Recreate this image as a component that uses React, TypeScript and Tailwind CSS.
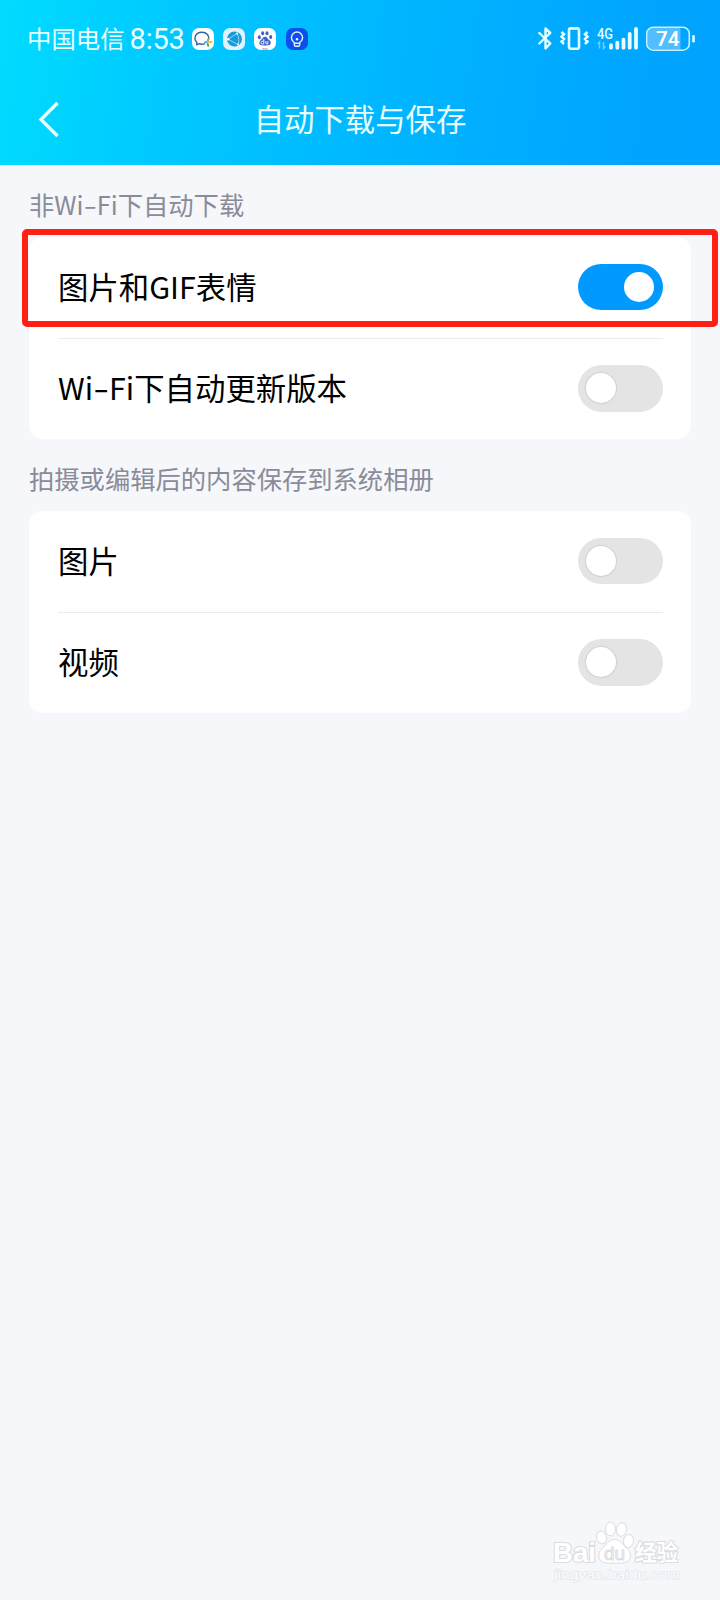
import { useState, type ReactNode } from "react";

function Toggle({ on, onChange }: { on: boolean; onChange: () => void }) {
  return (
    <button
      type="button"
      role="switch"
      aria-checked={on}
      onClick={onChange}
      className={`mb-px flex h-[46.5px] w-[85px] items-center rounded-full px-2 ${
        on ? "justify-end bg-[#0099ff]" : "justify-start bg-[#e4e4e4]"
      }`}
    >
      <span
        className={`h-[30px] w-[30px] rounded-full bg-white ${
          on ? "mr-px" : "shadow-[0_0_1px_1px_rgba(0,0,0,0.09)]"
        }`}
      />
    </button>
  );
}

function WiFi() {
  return (
    <span>
      Wi<span className="mx-[0.09em] inline-block scale-x-150">-</span>Fi
    </span>
  );
}

function SettingRow({
  label,
  initial = false,
}: {
  label: ReactNode;
  initial?: boolean;
}) {
  const [on, setOn] = useState(initial);

  return (
    <div className="flex h-[100.5px] items-center justify-between">
      <span className="pb-[3px] text-[30.4px] leading-none whitespace-nowrap text-black">
        {label}
      </span>
      <Toggle on={on} onChange={() => setOn(!on)} />
    </div>
  );
}

function SectionTitle({ children }: { children: ReactNode }) {
  return (
    <h2 className="flex h-[72px] items-center pt-[7px] text-[25.3px] leading-none text-[#8a8b98]">
      <span>{children}</span>
    </h2>
  );
}

function AppIcons() {
  return (
    <div className="ml-[7px] flex gap-[9.3px]">
      <svg width="22" height="22" viewBox="0 0 22 22" fill="none">
        <rect width="22" height="22" rx="7" fill="#fff" />
        <path
          d="M12.5 15.8c-1.5.5-3.8.5-5.2-.1l-2.7 1.1.4-2.3C1.5 11.6 2.5 4.200 9.800 4.200c5.200 0 7.500 3.600 7 7"
          stroke="#2d62ae"
          strokeWidth="1.4"
          strokeLinecap="round"
          strokeLinejoin="round"
        />
        <path d="M13 14.5l2.200-.8" stroke="#45a0dc" strokeWidth="1.8" strokeLinecap="round" />
        <path d="M16 11.2v2.300" stroke="#e9a23b" strokeWidth="2" strokeLinecap="round" />
        <path d="M17.5 14.3l2-.3" stroke="#e5c532" strokeWidth="2" strokeLinecap="round" />
        <path d="M15.7 16l.5 1.7" stroke="#54a653" strokeWidth="2" strokeLinecap="round" />
      </svg>
      <svg width="22" height="22" viewBox="0 0 22 22" fill="none">
        <rect width="22" height="22" rx="7" fill="#e3f3fd" />
        <circle cx="11.5" cy="11" r="7.5" fill="#159bdc" />
        <path
          d="M5 11.2L14 5.500M5 11.200l10 5.500M14 5.500c2 3.500 2.400 7.500 1 11.200"
          stroke="#b5e4fa"
          strokeWidth=".8"
        />
        <circle cx="5.2" cy="11.2" r="1.3" fill="#fff" />
        <circle cx="14" cy="5.5" r="1" fill="#fff" />
        <circle cx="15" cy="16.6" r="1" fill="#fff" />
      </svg>
      <svg width="22" height="22" viewBox="0 0 22 22" fill="none">
        <rect width="22" height="22" rx="7" fill="#fff" />
        <g fill="#3f5fc4">
          <ellipse cx="5.3" cy="9.2" rx="1.5" ry="2" />
          <ellipse cx="8.7" cy="5.2" rx="1.5" ry="2" />
          <ellipse cx="13" cy="5.2" rx="1.5" ry="2" />
          <ellipse cx="16.7" cy="9" rx="1.5" ry="2" />
          <path d="M11 8.800c-2 0-2.600 2-4 3.200-1.500 1.200-2 2-1.600 3.500.4 1.600 1.800 2 5.600 1.900 3.800.1 5.200-.3 5.600-1.900.4-1.500-.1-2.300-1.600-3.500-1.400-1.200-2-3.200-4-3.200z" />
        </g>
        <path
          d="M9.800 11v5H8.300a1.200 1.200 0 010-2.700h1.500M11.800 13v2q0 1 1 1h1v-3"
          stroke="#fff"
          strokeWidth=".9"
        />
        <path d="M8 21h6" stroke="#d97a8c" strokeWidth="1" />
      </svg>
      <svg width="22" height="22" viewBox="0 0 22 22" fill="none">
        <rect width="22" height="22" rx="7" fill="#0b50e8" />
        <path
          d="M8.300 14.500C6.500 13.300 5.400 11.900 5.400 9.600a5.600 5.600 0 0111.200 0c0 2.300-1.100 3.700-2.900 4.900v2.300q0 1.500-1.500 1.500H9.800q-1.500 0-1.500-1.500zM8.300 15.300h5.400"
          stroke="#e4eeff"
          strokeWidth="1.4"
          strokeLinejoin="round"
        />
        <circle cx="11" cy="11.3" r="1.2" fill="#fff" />
      </svg>
    </div>
  );
}

function SystemIcons() {
  return (
    <svg width="160" height="30" viewBox="0 0 160 30" fill="none">
      {/* bluetooth */}
      <path
        d="M2.300 9l11 10.500-4.800 5V4.500l4.800 4.500-11 10.500"
        stroke="#e4ffff"
        strokeWidth="2.4"
        strokeLinejoin="round"
        strokeLinecap="round"
      />
      {/* vibrate */}
      <rect x="32" y="4.4" width="10" height="20.4" rx="2" stroke="#e4ffff" strokeWidth="2.6" />
      <path
        d="M24.500 8l2.500 2.300-2.500 2.400 2.500 2.400-2.500 2.400 2.500 2.500M50.500 8l-2.500 2.300 2.500 2.400-2.500 2.400 2.500 2.400-2.500 2.500"
        stroke="#e4ffff"
        strokeWidth="2.5"
      />
      {/* mobile signal */}
      <text
        x="60"
        y="14.5"
        fill="#e4ffff"
        fontFamily="Roboto, sans-serif"
        fontSize="15"
        fontWeight="500"
        textLength="16"
        lengthAdjust="spacingAndGlyphs"
      >
        4G
      </text>
      <path d="M62.500 24.500v-6.500l-2 2M66.500 18v6.500l2-2" stroke="#75cdff" strokeWidth="1.5" />
      <path
        d="M74 23.700v-2.500M80.300 23.700v-5M86.500 23.700v-8M92.700 23.700V10M99 23.700V5"
        stroke="#e4ffff"
        strokeWidth="3.8"
        strokeLinecap="round"
      />
      {/* battery */}
      <rect x="111" y="4" width="20" height="21.5" rx="5" fill="#52bdff" />
      <path d="M121 4h22.500v21.500H121z" fill="#52bdff" />
      <rect x="109.800" y="3.2" width="42.5" height="23" rx="6.5" stroke="#c5f2ff" strokeWidth="1.6" />
      <path d="M156.500 12.300v5" stroke="#e4ffff" strokeWidth="2.6" strokeLinecap="round" />
      <text
        x="119"
        y="22"
        fill="#fff"
        fontFamily="Roboto, sans-serif"
        fontSize="21"
        fontWeight="600"
        textLength="23.5"
        lengthAdjust="spacingAndGlyphs"
      >
        74
      </text>
    </svg>
  );
}

function Watermark() {
  return (
    <svg
      className="absolute right-0 bottom-0"
      width="190"
      height="100"
      viewBox="0 0 190 100"
      fill="#fff"
      stroke="#dcdde1"
      strokeWidth="1"
    >
      <g fontFamily="'Liberation Sans', 'Noto Sans CJK SC', sans-serif" fontWeight="700">
        <g strokeWidth="2.2" paintOrder="stroke">
          <text x="23" y="61.5" fontSize="27" textLength="43" lengthAdjust="spacingAndGlyphs">
            Bai
          </text>
          <text x="105" y="60" fontSize="22" textLength="43" lengthAdjust="spacingAndGlyphs">
            经验
          </text>
        </g>
        <ellipse cx="71.5" cy="37.5" rx="5" ry="6.5" transform="rotate(-12 71.5 37.5)" />
        <ellipse cx="80.5" cy="29" rx="5" ry="6.8" />
        <ellipse cx="91.5" cy="29.5" rx="5" ry="6.8" transform="rotate(8 91.5 29.5)" />
        <ellipse cx="98.5" cy="41" rx="5" ry="6.5" transform="rotate(8 98.5 41)" />
        <path d="M84.500 39.500c-6 0-8 5-11.500 8.500-4 3.500-5 6-3.800 10 1.500 5 6 5.500 15.300 5 9.300.5 14 0 15.500-5 1.200-4 .2-6.500-3.800-10-3.500-3.500-5.700-8.500-11.700-8.500z" />
        <text
          x="74"
          y="59.5"
          fontSize="19"
          fontWeight="400"
          fill="#f5f7fb"
          textLength="21"
          lengthAdjust="spacingAndGlyphs"
        >
          du
        </text>
      </g>
      <text
        x="24"
        y="79"
        fontFamily="'Liberation Sans', sans-serif"
        fontSize="13.5"
        textLength="126"
        lengthAdjust="spacingAndGlyphs"
        fill="#fcfcfe"
        stroke="#e6e7eb"
        strokeWidth="1.4"
        paintOrder="stroke"
      >
        jingyan.baidu.com
      </text>
    </svg>
  );
}

export default function App() {
  return (
    <div className="relative min-h-[1600px] w-[720px] overflow-hidden bg-[#f5f7fb] font-['Noto_Sans_CJK_SC',sans-serif]">
      <header className="h-[165px] bg-linear-[98deg,#00dcff_0%,#00c8ff_25%,#00b4ff_58%,#00a5ff_88%,#00a3ff_100%] text-[#e8ffff]">
        <div className="flex h-[78px] items-center pr-[23px] pl-[27px]">
          <span className="pb-0.5 text-[24.4px] leading-none">中国电信</span>
          <span className="ml-[5px] font-['Roboto',sans-serif] text-[29px] leading-none tracking-[-0.2px]">
            8:53
          </span>
          <AppIcons />
          <div className="ml-auto">
            <SystemIcons />
          </div>
        </div>
        <div className="grid h-[82px] grid-cols-[1fr_auto_1fr] items-center">
          <button type="button" aria-label="返回" className="ml-[37px] w-6">
            <svg width="24" height="38" viewBox="0 0 24 38" fill="none">
              <path d="M20.5 3L4 19.500l16.500 16.500" stroke="currentColor" strokeWidth="3.4" />
            </svg>
          </button>
          <h1 className="pb-0.5 text-[30.4px] leading-none">自动下载与保存</h1>
        </div>
      </header>

      <main className="px-[29px]">
        <SectionTitle>
          非<WiFi />下自动下载
        </SectionTitle>
        <section className="relative rounded-[14px] bg-white pr-7 pl-[29px]">
          <SettingRow label="图片和GIF表情" initial />
          <div className="h-px bg-[#ebebed]" />
          <SettingRow
            label={
              <>
                <WiFi />下自动更新版本
              </>
            }
          />
          <div className="pointer-events-none absolute -top-2 -left-[7px] h-[98px] w-[696px] rounded-[5px] border-[6px] border-[#ff2015]" />
        </section>

        <SectionTitle>拍摄或编辑后的内容保存到系统相册</SectionTitle>
        <section className="rounded-[14px] bg-white pr-7 pl-[29px]">
          <SettingRow label="图片" />
          <div className="h-px bg-[#ebebed]" />
          <SettingRow label="视频" />
        </section>
      </main>

      <Watermark />
    </div>
  );
}
